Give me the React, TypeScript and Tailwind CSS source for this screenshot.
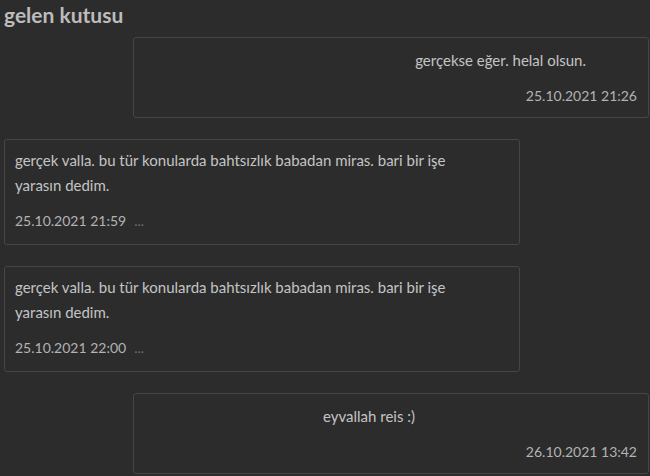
const font = "font-['Lato','Liberation_Sans',sans-serif]";

interface MessageProps {
  body: string;
  date: string;
  mine?: boolean;
  bodyClass?: string;
}

function Message({ body, date, mine, bodyClass }: MessageProps) {
  return (
    <div
      className={`w-[516px] rounded-[3px] border border-[#464646] bg-[#2c2c2c] ${
        mine ? "ml-[133px] h-[81px] px-[11px] pt-[10px]" : "ml-[4px] h-[106px] px-[10px] pt-[8px]"
      }`}
    >
      <p className={`text-[15px] leading-[25px] text-[#c4c4c4] ${bodyClass ?? ""}`}>{body}</p>
      <div className={`mt-[13px] flex items-center text-[14px] leading-[20px] text-[#b3b3b3] ${mine ? "justify-end" : ""}`}>
        <span>{date}</span>
        {!mine && <span className="ml-[8px] text-[#6f6f6f]">...</span>}
      </div>
    </div>
  );
}

export default function App() {
  return (
    <div className={`h-[476px] w-[650px] overflow-hidden bg-[#2c2c2c] ${font}`}>
      <h1 className="pl-[4px] pt-[1px] text-[21px] font-bold leading-[27px] text-[#bcbcbc]">gelen kutusu</h1>
      <div className="mt-[9px] flex flex-col gap-[21px]">
        <Message mine body="gerçekse eğer. helal olsun." date="25.10.2021 21:26" bodyClass="pr-[51px] text-right" />
        <Message
          body="gerçek valla. bu tür konularda bahtsızlık babadan miras. bari bir işe yarasın dedim."
          date="25.10.2021 21:59"
          bodyClass="pr-[40px]"
        />
        <Message
          body="gerçek valla. bu tür konularda bahtsızlık babadan miras. bari bir işe yarasın dedim."
          date="25.10.2021 22:00"
          bodyClass="pr-[40px]"
        />
        <Message mine body="eyvallah reis :)" date="26.10.2021 13:42" bodyClass="pr-[222px] text-right" />
      </div>
    </div>
  );
}
